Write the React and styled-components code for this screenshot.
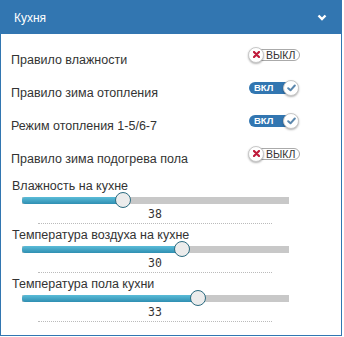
import React from "react";
import styled, { createGlobalStyle } from "styled-components";

const Global = createGlobalStyle`
  html, body { margin: 0; padding: 0; background: #fff; }
  body { font-family: "Liberation Sans", Arial, sans-serif; color: #333; }
`;

const Panel = styled.div`
  width: 342px;
  height: 336px;
  box-sizing: border-box;
  border: 1px solid #3276b1;
  background: #fff;
  display: flex;
  flex-direction: column;
`;

const Header = styled.div`
  height: 33px;
  flex: none;
  background: #3276b1;
  color: #fff;
  display: flex;
  align-items: center;
  justify-content: space-between;
  padding: 0 14px 0 13px;
  font-size: 12px;
`;

const Body = styled.div`
  padding: 8px 0 0 10px;
  display: flex;
  flex-direction: column;
`;

const Rules = styled.div`
  display: flex;
  flex-direction: column;
`;

const Sliders = styled.div`
  display: flex;
  flex-direction: column;
  margin-top: 6px;
`;

const Row = styled.div`
  height: 33px;
  display: grid;
  grid-template-columns: 238px auto;
  align-items: center;
`;

const Label = styled.div`
  font-size: 12.5px;
  line-height: 15px;
  padding-top: 4px;
  color: #333;
`;

const Toggle = styled.div`
  position: relative;
  width: 52px;
  height: 16px;
  margin-bottom: 8px;
  margin-left: ${(p) => (p.$on ? "0" : "-1px")};
`;

const Pill = styled.div`
  position: absolute;
  top: 2px;
  height: 12px;
  box-sizing: border-box;
  border-radius: 6px;
  display: flex;
  align-items: center;
  font-size: ${(p) => (p.$on ? "9.5px" : "10.5px")};
  font-weight: ${(p) => (p.$on ? "bold" : "normal")};
  ${(p) =>
    p.$on
      ? `left: 0; width: 44px; background: #3276b1; color: #fff; padding-left: 5px;`
      : `left: 8px; width: 44px; background: #fff; color: #333; border: 1px solid #aaa; padding-left: 9px;`}
`;

const Knob = styled.div`
  position: absolute;
  top: 0;
  ${(p) => (p.$on ? "right: 2px;" : "left: 0;")}
  width: 16px;
  height: 16px;
  box-sizing: border-box;
  border-radius: 50%;
  background: #fff;
  border: 1px solid #c8c8c8;
  box-shadow: 0 1px 2px rgba(0, 0, 0, 0.3);
  display: flex;
  align-items: center;
  justify-content: center;
`;

const SliderGroup = styled.div`
  display: flex;
  flex-direction: column;
  margin-bottom: 5px;
`;

const SliderLabel = styled.div`
  font-size: 12.5px;
  line-height: 13px;
  color: #333;
  padding-left: 1px;
`;

const TrackWrap = styled.div`
  height: 14px;
  display: flex;
  align-items: center;
  padding-left: 11px;
`;

const Track = styled.div`
  position: relative;
  width: 267px;
  height: 7px;
  background: #c8c8c8;
`;

const Fill = styled.div`
  height: 100%;
  background: linear-gradient(#5bbcd8, #2f8fb2);
  border-radius: 3px 0 0 3px;
`;

const Thumb = styled.div`
  position: absolute;
  top: 50%;
  width: 16px;
  height: 16px;
  margin: -8px 0 0 -8px;
  box-sizing: border-box;
  border-radius: 50%;
  background: #ececec;
  border: 1.5px solid #2b6b80;
`;

const Value = styled.div`
  margin-left: 27px;
  width: 234px;
  text-align: center;
  font-family: "DejaVu Sans Mono", "Liberation Mono", monospace;
  font-size: 11.5px;
  line-height: 14px;
  padding-bottom: 2px;
  border-bottom: 1px dotted #bbb;
  color: #333;
`;

const Check = () => (
  <svg width="9" height="8" viewBox="0 0 9 8">
    <polyline points="1.2,4.2 3.5,6.3 7.8,1.5" fill="none" stroke="#5b87ad" strokeWidth="2" strokeLinecap="round" strokeLinejoin="round" />
  </svg>
);

const Cross = () => (
  <svg width="7" height="7" viewBox="0 0 7 7">
    <path d="M1 1 L6 6 M6 1 L1 6" stroke="#c01c3c" strokeWidth="2.2" strokeLinecap="round" />
  </svg>
);

const Switch = ({ on }) => (
  <Toggle $on={on}>
    <Pill $on={on}>{on ? "ВКЛ" : "ВЫКЛ"}</Pill>
    <Knob $on={on}>{on ? <Check /> : <Cross />}</Knob>
  </Toggle>
);

const Slider = ({ label, value, pct }) => (
  <SliderGroup>
    <SliderLabel>{label}</SliderLabel>
    <TrackWrap>
      <Track>
        <Fill style={{ width: `${pct}%` }} />
        <Thumb style={{ left: `${pct}%` }} />
      </Track>
    </TrackWrap>
    <Value>{value}</Value>
  </SliderGroup>
);

const rules = [
  ["Правило влажности", false],
  ["Правило зима отопления", true],
  ["Режим отопления 1-5/6-7", true],
  ["Правило зима подогрева пола", false],
];

const sliders = [
  ["Влажность на кухне", 38, 37.8],
  ["Температура воздуха на кухне", 30, 59.9],
  ["Температура пола кухни", 33, 65.9],
];

export default function App() {
  return (
    <>
      <Global />
      <Panel>
        <Header>
          <span>Кухня</span>
          <svg width="10" height="7" viewBox="0 0 10 7">
            <polyline points="1.5,1.5 5,5 8.5,1.5" fill="none" stroke="#fff" strokeWidth="2.4" />
          </svg>
        </Header>
        <Body>
          <Rules>
            {rules.map(([t, on]) => (
              <Row key={t}>
                <Label>{t}</Label>
                <Switch on={on} />
              </Row>
            ))}
          </Rules>
          <Sliders>
            {sliders.map(([l, v, p]) => (
              <Slider key={l} label={l} value={v} pct={p} />
            ))}
          </Sliders>
        </Body>
      </Panel>
    </>
  );
}
